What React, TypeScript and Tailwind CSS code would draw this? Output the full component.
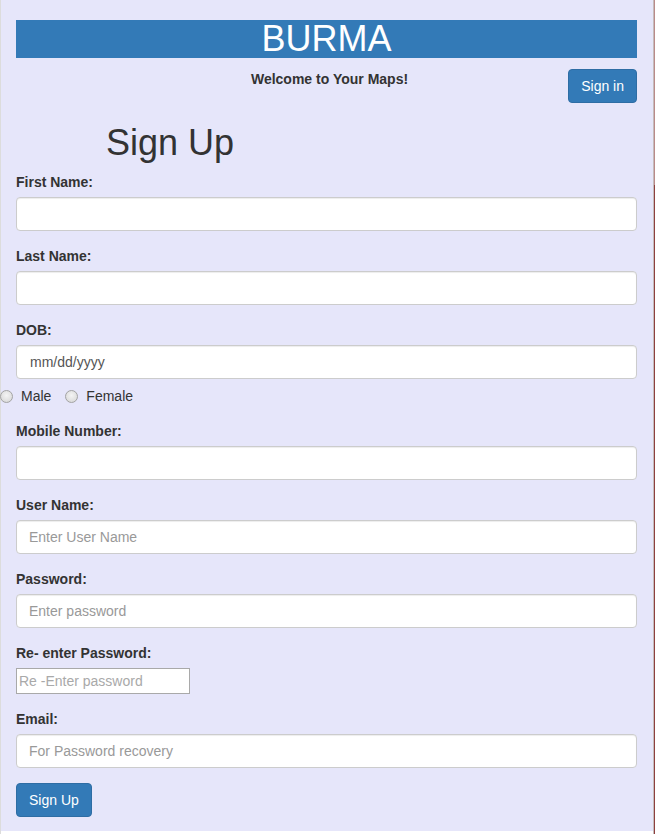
import React from "react";

const font = { fontFamily: '"Liberation Sans", Arial, sans-serif' };

function Field({ label, placeholder, value }: { label: string; placeholder?: string; value?: string }) {
  return (
    <div className="mb-[15px]">
      <label className="mb-[5px] block text-[14px] font-bold leading-[20px] text-[#333]">
        {label}
      </label>
      <div className="flex h-[34px] items-center rounded-[4px] border border-[#ccc] bg-white px-[12px] text-[14px] shadow-[inset_0_1px_1px_rgba(0,0,0,0.075)]">
        {value ? (
          <span className="pl-[1px] text-[#555]">{value}</span>
        ) : (
          <span className="text-[#999]">{placeholder}</span>
        )}
      </div>
    </div>
  );
}

function Radio({ label }: { label: string }) {
  return (
    <div className="flex items-center gap-[8px]">
      <span className="h-[13px] w-[13px] rounded-full border border-[#a3a3a3] bg-[radial-gradient(circle_at_50%_40%,#f4f4f4,#d4d4d4)]" />
      <span className="text-[14px] text-[#333]">{label}</span>
    </div>
  );
}

export default function App() {
  return (
    <div className="flex min-h-[834px] w-[655px] bg-white" style={font}>
      <div className="w-[1px] bg-[#dcdcdc]" />
      <div className="h-[831px] w-[652px] bg-[#e6e6fa] pl-[15px] pr-[16px]">
        {/* Header */}
        <div className="mt-[20px] h-[38px] bg-[#337ab7] text-center text-[36px] leading-[38px] text-white">
          BURMA
        </div>
        <div className="flex items-start">
          <div className="flex-1" />
          <div className="ml-[6px] mt-[11px] text-[14px] font-bold leading-[20px] text-[#333]">
            Welcome to Your Maps!
          </div>
          <div className="flex flex-1 justify-end">
            <button className="mt-[11px] h-[34px] rounded-[4px] border border-[#2e6da4] bg-[#337ab7] px-[12px] text-[14px] text-white">
              Sign in
            </button>
          </div>
        </div>

        {/* Form */}
        <h1 className="mt-[20px] pl-[90px] text-[36px] leading-[40px] text-[#333]">
          Sign Up
        </h1>
        <div className="mt-[9px]">
          <Field label="First Name:" />
          <Field label="Last Name:" />
          <div className="mb-[7px]">
            <label className="mb-[5px] block text-[14px] font-bold leading-[20px] text-[#333]">
              DOB:
            </label>
            <div className="flex h-[34px] items-center rounded-[4px] border border-[#ccc] bg-white px-[12px] text-[14px] shadow-[inset_0_1px_1px_rgba(0,0,0,0.075)]">
              <span className="pl-[1px] text-[#555]">mm/dd/yyyy</span>
            </div>
          </div>
          <div className="mb-[15px] ml-[-16px] flex h-[20px] items-center gap-[14px]">
            <Radio label="Male" />
            <Radio label="Female" />
          </div>
          <Field label="Mobile Number:" />
          <Field label="User Name:" placeholder="Enter User Name" />
          <Field label="Password:" placeholder="Enter password" />
          <div className="mb-[15px]">
            <label className="mb-[5px] block text-[14px] font-bold leading-[20px] text-[#333]">
              Re- enter Password:
            </label>
            <div className="flex h-[26px] w-[174px] items-center border border-[#a9a9a9] bg-white px-[2px] text-[14px] text-[#a9a9a9]">
              Re -Enter password
            </div>
          </div>
          <Field label="Email:" placeholder="For Password recovery" />
          <button className="h-[34px] rounded-[4px] border border-[#2e6da4] bg-[#337ab7] px-[12px] text-[14px] text-white">
            Sign Up
          </button>
        </div>
      </div>
      <div className="w-[1px] bg-[#c4bcbc]" />
      <div className="flex w-[1px] flex-col">
        <div className="h-[185px] bg-[#b98a8a]" />
        <div className="flex-1 bg-[#8e3f3f]" />
      </div>
    </div>
  );
}
